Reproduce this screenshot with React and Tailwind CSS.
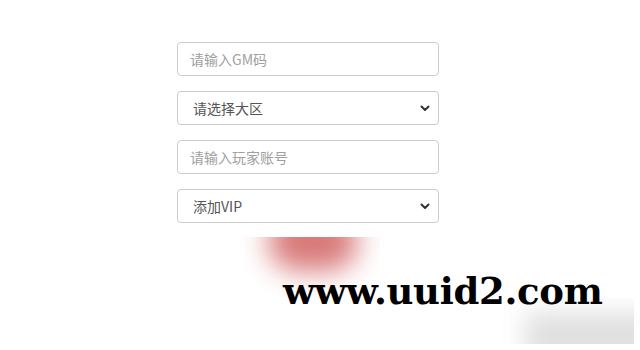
import React from 'react';

const field = "w-[262px] h-[34px] border border-[#cccccc] rounded-[4px] bg-white px-3 text-[14px] text-[#555] outline-none placeholder:text-[#a0a0a0]";

const Chevron = () => (
  <svg className="ml-auto" width="10" height="7" viewBox="0 0 10 7" fill="none">
    <path d="M1.5 1.5 L5 5 L8.5 1.5" stroke="#333" strokeWidth="2" strokeLinecap="round" strokeLinejoin="round" />
  </svg>
);

const FakeSelect = ({ label }) => (
  <div className={`${field} flex items-center pl-[15px] pr-[8px]`}>
    <span>{label}</span>
    <Chevron />
  </div>
);

export default function App() {
  return (
    <div className="relative w-[640px] h-[350px] bg-white overflow-hidden" style={{ fontFamily: '"Noto Sans CJK SC", "Noto Sans", sans-serif' }}>
      <div className="flex flex-col items-start pl-[177px] pt-[42px] gap-[15px]">
        <input className={field} placeholder="请输入GM码" />
        <FakeSelect label="请选择大区" />
        <input className={field} placeholder="请输入玩家账号" />
        <FakeSelect label="添加VIP" />
      </div>

      {/* watermark overlay */}
      <div className="absolute left-[240px] top-[237px] w-[140px] h-[60px] overflow-hidden">
        <div className="absolute left-[28px] top-[-26px] w-[90px] h-[60px] rounded-full bg-[#d46a6a] opacity-90 blur-[14px]" />
      </div>
      <div className="absolute left-[500px] top-[298px] w-[134px] h-[46px] overflow-hidden">
        <div className="absolute left-[25px] top-[14px] w-[140px] h-[50px] bg-[#e0e0e0] blur-[12px]" />
      </div>
      <div className="absolute left-[283px] top-[273px] text-[37px] leading-none font-bold text-black tracking-[-0.3px]" style={{ fontFamily: '"DejaVu Serif", serif' }}>
        www.uuid2.com
      </div>
    </div>
  );
}
